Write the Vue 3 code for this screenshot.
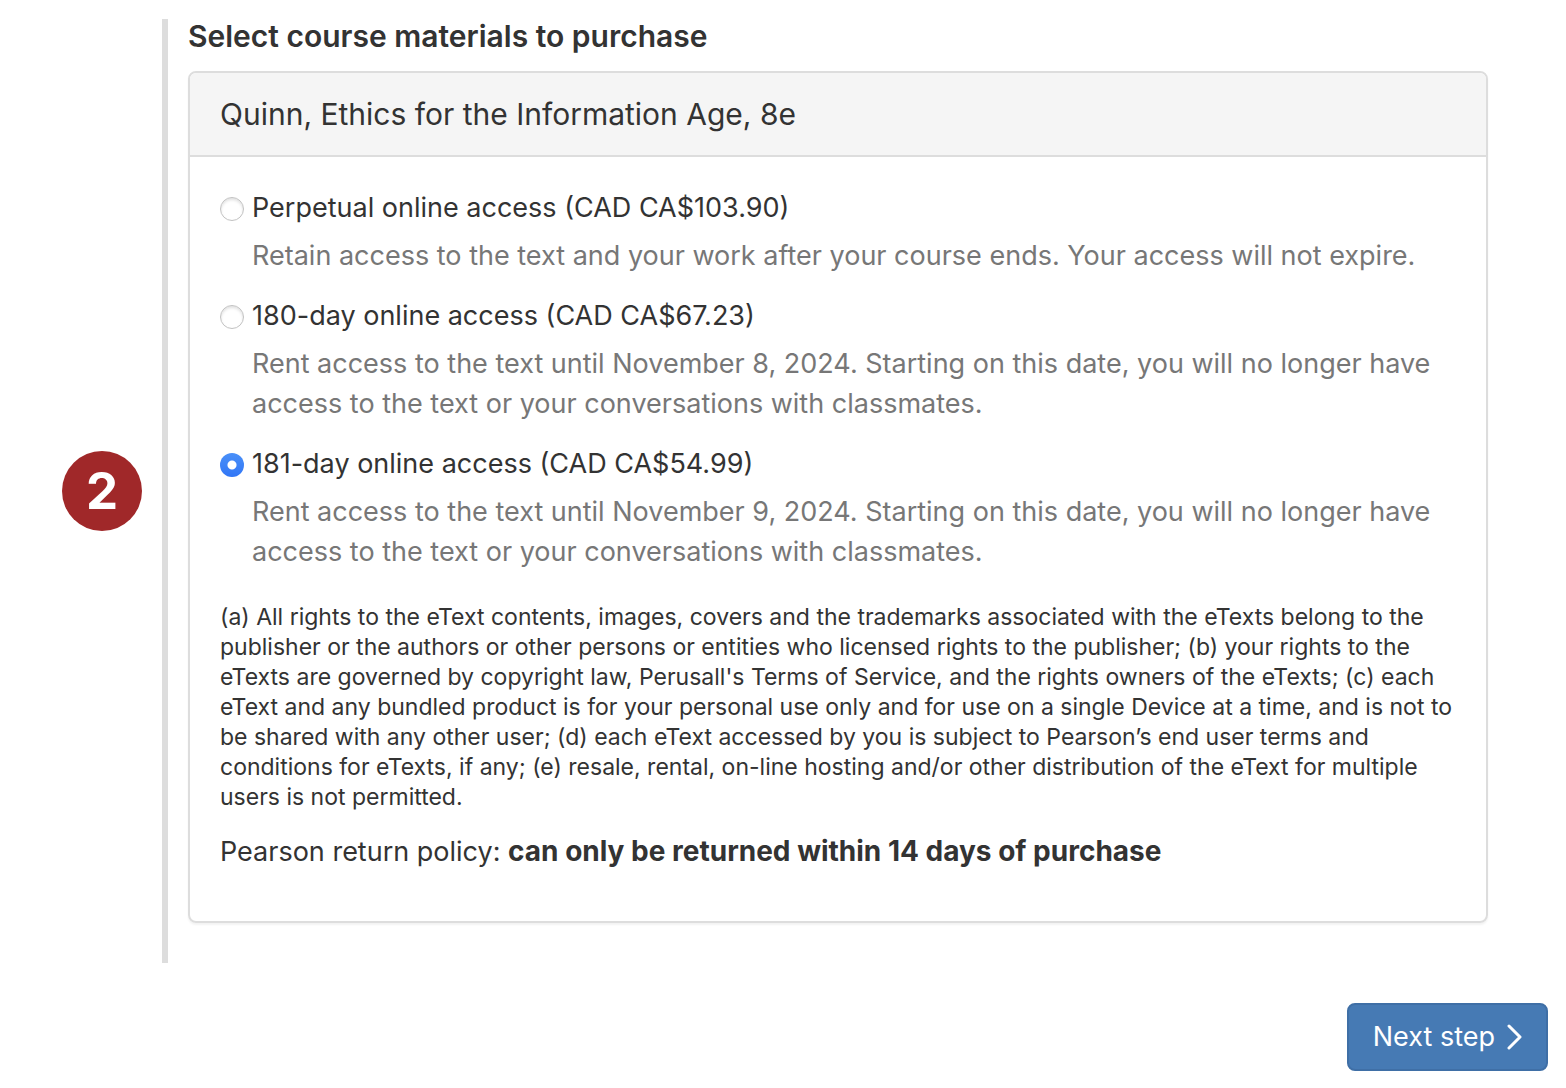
<script setup>
import { ref } from 'vue'

const selected = ref('181-day')

const options = [
  {
    id: 'perpetual',
    label: 'Perpetual online access (CAD CA$103.90)',
    detail: 'Retain access to the text and your work after your course ends. Your access will not expire.',
  },
  {
    id: '180-day',
    label: '180-day online access (CAD CA$67.23)',
    detail: 'Rent access to the text until November 8, 2024. Starting on this date, you will no longer have access to the text or your conversations with classmates.',
  },
  {
    id: '181-day',
    label: '181-day online access (CAD CA$54.99)',
    detail: 'Rent access to the text until November 9, 2024. Starting on this date, you will no longer have access to the text or your conversations with classmates.',
  },
]
</script>

<template>
  <main class="page">
    <section class="step">
      <div class="marker"><span class="badge">2</span></div>
      <div class="content">
        <h1 class="title">Select course materials to purchase</h1>
        <article class="card">
          <h2 class="card-head">Quinn, Ethics for the Information Age, 8e</h2>
          <div class="card-body">
            <div v-for="o in options" :key="o.id" class="option">
              <label class="choice">
                <input v-model="selected" class="radio" type="radio" name="access" :value="o.id" />
                <span>{{ o.label }}</span>
              </label>
              <p class="detail">{{ o.detail }}</p>
            </div>
            <p class="legal">
              (a) All rights to the eText contents, images, covers and the trademarks associated with the eTexts belong to the
              publisher or the authors or other persons or entities who licensed rights to the publisher; (b) your rights to the
              eTexts are governed by copyright law, Perusall's Terms of Service, and the rights owners of the eTexts; (c) each
              eText and any bundled product is for your personal use only and for use on a single Device at a time, and is not to
              be shared with any other user; (d) each eText accessed by you is subject to Pearson’s end user terms and
              conditions for eTexts, if any; (e) resale, rental, on-line hosting and/or other distribution of the eText for multiple
              users is not permitted.
            </p>
            <p class="policy">Pearson return policy: <strong>can only be returned within 14 days of purchase</strong></p>
          </div>
        </article>
      </div>
    </section>
    <footer class="actions">
      <button class="next" type="button">
        Next step
        <svg class="chevron" viewBox="0 0 16 26" aria-hidden="true"><path d="M3 2l11 11L3 24" /></svg>
      </button>
    </footer>
  </main>
</template>

<style>
body {
  background: #fff;
}
</style>

<style scoped>
.page {
  box-sizing: border-box;
  padding: 19px 18px 17px 62px;
  font-family: Inter, "Liberation Sans", sans-serif;
  font-size: 27px;
  line-height: 40px;
  color: #333;
}
.step {
  display: flex;
  margin-right: 60px;
}
.marker {
  flex: none;
  display: flex;
  align-items: center;
  width: 100px;
}
.badge {
  width: 80px;
  height: 80px;
  border-radius: 50%;
  background: #a02829;
  color: #fff;
  font-size: 51px;
  font-weight: 700;
  line-height: 80px;
  text-align: center;
}
.content {
  flex: 1;
  min-width: 0;
  padding: 0 0 40px 20px;
  border-left: 6px solid #ddd;
}
.title {
  margin: 0 0 18px;
  font-size: 30px;
  font-weight: 600;
  line-height: 34px;
}
.card {
  border: 2px solid #ddd;
  border-radius: 8px;
  box-shadow: 0 2px 2px rgba(0, 0, 0, 0.05);
}
.card-head {
  margin: 0;
  padding: 20px 30px;
  border-bottom: 2px solid #ddd;
  border-radius: 6px 6px 0 0;
  background: #f5f5f5;
  font-size: 30px;
  font-weight: 400;
  line-height: 42px;
}
.card-body {
  padding: 31px 30px 49px;
}
.option {
  margin-bottom: 20px;
}
.choice {
  display: flex;
  align-items: center;
  gap: 8px;
}
.radio {
  appearance: none;
  flex: none;
  box-sizing: border-box;
  width: 24px;
  height: 24px;
  margin: 2px 0 0;
  border: 1px solid #c2c2c2;
  border-radius: 50%;
  background: #fff;
  box-shadow: inset 0 2px 3px rgba(0, 0, 0, 0.12);
}
.radio:checked {
  border: 0;
  background: radial-gradient(circle, #fff 4px, transparent 5px), linear-gradient(#4a90f8, #3176f6);
  box-shadow: none;
}
.detail {
  margin: 8px 0 0;
  padding-left: 32px;
  color: #777;
}
.legal {
  margin: 30px 0 20px;
  font-size: 23px;
  line-height: 30px;
}
.policy {
  margin: 0;
}
.policy strong {
  font-size: 28px;
  line-height: 1;
}
.actions {
  display: flex;
  justify-content: flex-end;
  margin-top: 40px;
}
.next {
  display: flex;
  align-items: center;
  gap: 11px;
  padding: 12px 24px;
  border: 2px solid #3f6fa6;
  border-radius: 8px;
  background: #467ab4;
  color: #fff;
  font: inherit;
}
.chevron {
  width: 16px;
  height: 26px;
  fill: none;
  stroke: currentColor;
  stroke-width: 3;
  stroke-linecap: round;
  stroke-linejoin: round;
}
</style>
